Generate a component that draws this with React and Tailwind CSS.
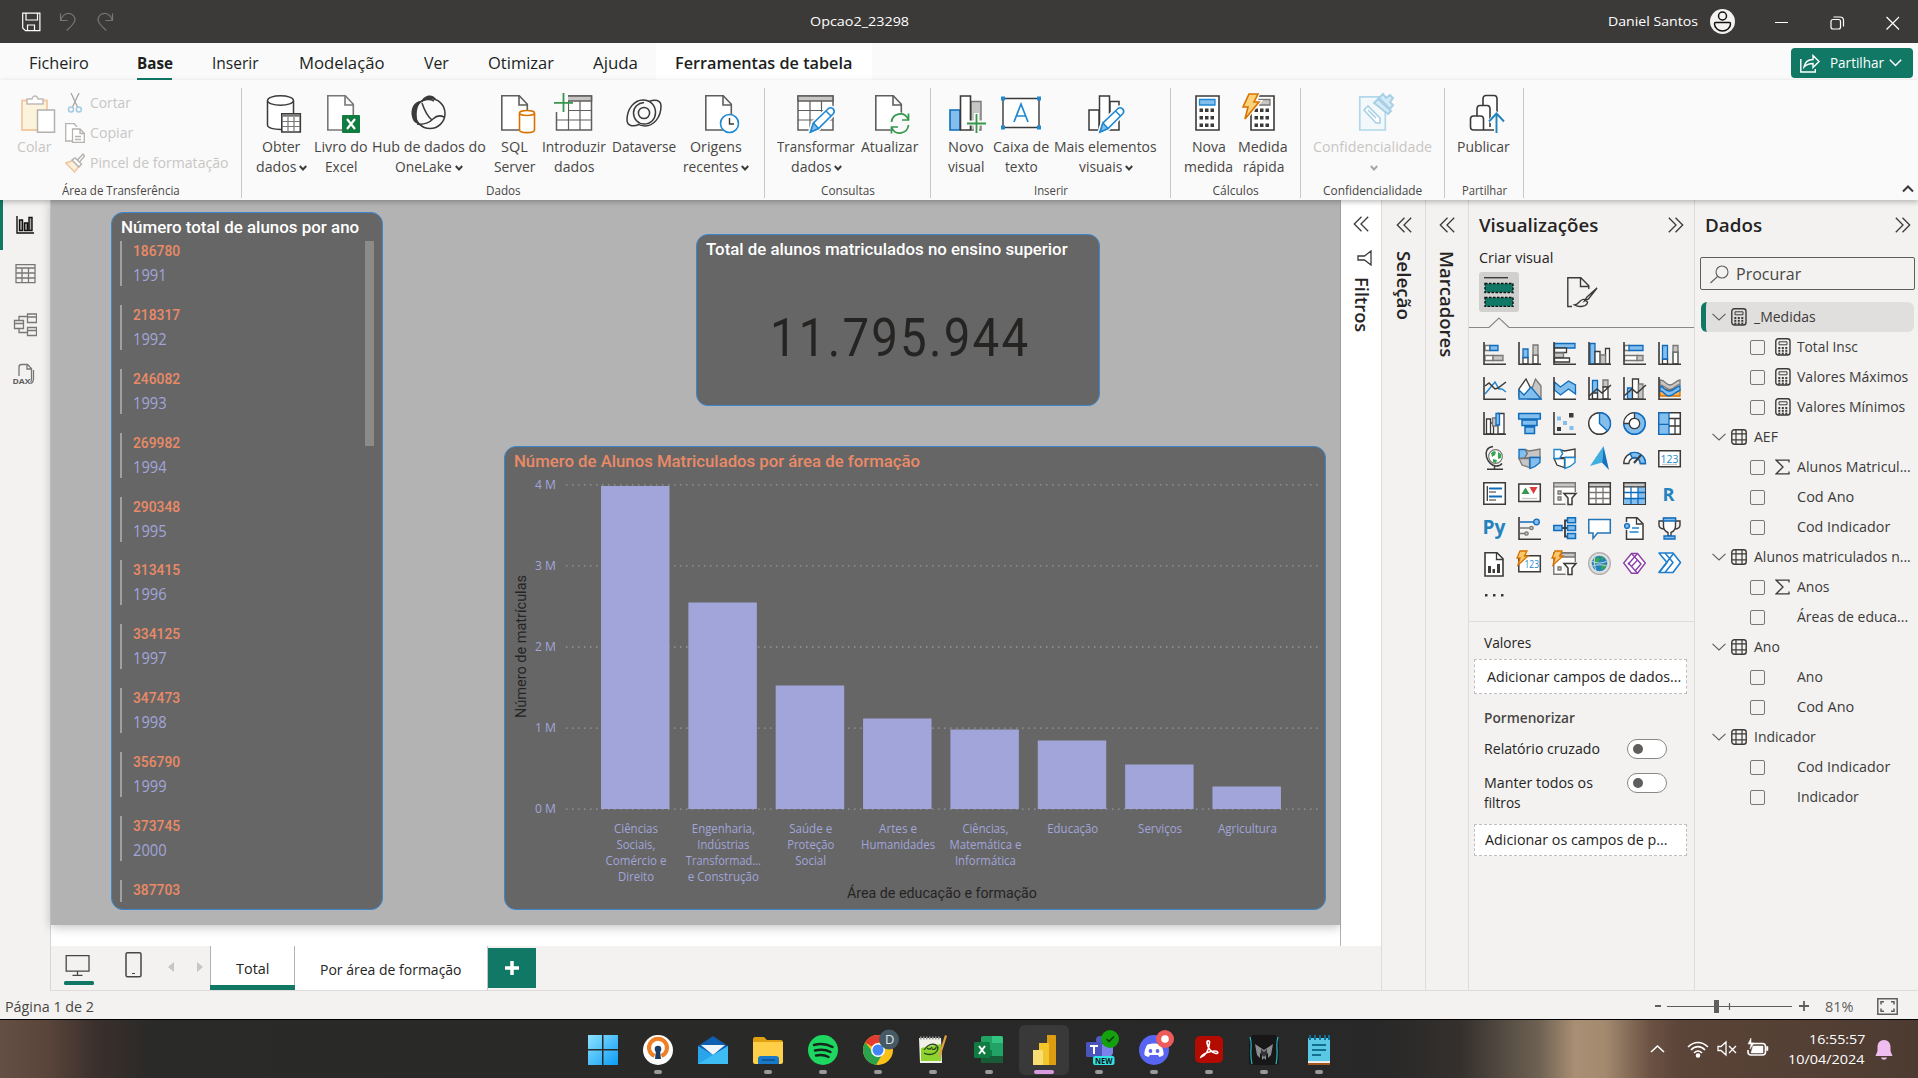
import React, { useLayoutEffect, useRef, useState } from "react";

/* Text squeezed or stretched to an exact advance width. */
function Fit({ w, vertical, className = "", children }) {
  const ref = useRef(null);
  const [k, setK] = useState(1);
  useLayoutEffect(() => {
    const n = vertical ? ref.current.offsetHeight : ref.current.offsetWidth;
    if (n) setK(w / n);
  }, [w, vertical]);
  return (
    <span
      className={"inline-block shrink-0 text-left whitespace-nowrap " + className}
      style={vertical ? { height: w } : { width: w }}
    >
      <span
        ref={ref}
        className={vertical ? "inline-block origin-top [writing-mode:vertical-rl]" : "inline-block origin-left"}
        style={{ transform: vertical ? `scaleY(${k})` : `scaleX(${k})` }}
      >
        {children}
      </span>
    </span>
  );
}

const K = "#3b3a39";
const B = "#1e88d2";
const D = "#0f6cbd";
const L = "#83beec";
const G = "#797775";
const S = "#c8c6c4";

const Doc = ({ x = 5, c = "#605e5c" }) => (
  <path d={`M${x + 0.8} .8h17.5l8 8.5V35H${x + 0.8}zM${x + 18} 1v9h8.5`} fill="#fff" stroke={c} strokeWidth="1.6" />
);
const Pencil = ({ x = 12 }) => (
  <g transform={`translate(${x} 12)`}>
    <path d="M1 25l3-9L19 1.5a3.6 3.6 0 0 1 5 5L9 21.500z" fill="#fff" stroke="#fafafa" strokeWidth="5" />
    <path d="M1 25l3-9L19 1.500a3.600 3.600 0 0 1 5 5L9 21.500z" fill="#fff" stroke={B} strokeWidth="1.600" />
    <path d="M1 25l3-9 5 5.500zM16.500 4l5 5" fill={L} stroke={B} strokeWidth="1.500" />
  </g>
);
const Grid = ({ x = 1 }) => (
  <g stroke="#605e5c" strokeWidth="1.500">
    <path d={`M${x} 1h35v34H${x}z`} fill="#fff" />
    <path d={`M${x} 1h35v5H${x}z`} fill={S} />
    <path d={`M${x} 15.500h35M${x} 25h35M${x + 12} 6v29M${x + 23.500} 6v29`} strokeWidth="1.200" fill="none" />
  </g>
);
const Keys = ({ x, y, s = 3.5, gx = 5.500, gy = 7.500, c = K }) =>
  [0, 1, 2].map((r) => [0, 1, 2].map((q) => <rect key={r + "-" + q} x={x + q * gx} y={y + r * gy} width={s} height={s} fill={c} />));

const RI = {
  get: (
    <>
      <path d="M5.500 6v24c0 6 26 6 26 0V6" fill="#fff" stroke={K} strokeWidth="1.500" />
      <ellipse cx="18.500" cy="5.500" rx="13" ry="4.800" fill="#fff" stroke={K} strokeWidth="1.500" />
      <path d="M19.800 18.800h18.500V37H19.800z" fill="#fff" stroke={K} strokeWidth="1.600" />
      <path d="M20 20.500h18" stroke={G} strokeWidth="2.500" />
      <path d="M20 26.500h18M20 31.500h18M26 22v15M32 22v15" stroke={G} strokeWidth="1.200" />
    </>
  ),
  excel: (
    <g transform="translate(-1 0)">
      <Doc x={6} c="#797775" />
      <rect x="21" y="20" width="18" height="18" rx="1" fill="#107c41" />
      <path d="M26 24l8 10M34 24l-8 10" stroke="#fff" strokeWidth="2.200" />
    </g>
  ),
  lake: (
    <g transform="translate(-1 0)">
      <circle cx="21" cy="18.500" r="15" fill="#fafafa" stroke={K} strokeWidth="1.500" />
      <path d="M12 7C15-1 25-2 28 6 22 2 17 4 12 7z" fill={K} />
      <path d="M12 6C5 6 1 14 3 22c1 4 3 6 6 7-2-9-2-16 3-23z" fill={K} />
      <path d="M12 7c3-3 9-3 13-1M13 8c2 6 5 13 10 17M8 29c8 1 12-1 16-5s7-4 11-2" fill="none" stroke={K} strokeWidth="1.500" />
    </g>
  ),
  sql: (
    <>
      <Doc />
      <path d="M23.500 18v17c0 3.500 15 3.500 15 0V18" fill="#fff" stroke="#d97300" strokeWidth="1.600" />
      <ellipse cx="31" cy="18" rx="7.500" ry="2.500" fill="#fff" stroke="#d97300" strokeWidth="1.600" />
    </>
  ),
  enter: (
    <>
      <Grid x={1.500} />
      <path d="M-1 0h14v17H-1z" fill="#fafafa" />
      <path d="M-1 7.800h19M8.500-2v19" stroke="#36964b" strokeWidth="1.800" />
    </>
  ),
  dv: (
    <g fill="none" stroke={K} strokeWidth="1.500">
      <circle cx="19" cy="18" r="5.600" />
      <path d="M14 29.500C8 32 2 31 2 25 2 14 9 5 18 5c8 0 12.500 6 12.500 12.500S26 29 19 29c-6 0-10.500-5-10.500-11S13 8 19 7.500" />
      <path d="M24 6.500C30 4 36 5 36 11c0 11-7 20-16 20-3 0-5-.5-7-2" />
    </g>
  ),
  recent: (
    <g transform="translate(1 0)">
      <Doc x={7} />
      <circle cx="31.500" cy="28.500" r="9" fill="#fff" stroke={B} strokeWidth="1.600" />
      <path d="M31.500 23v6h4.500" fill="none" stroke={K} strokeWidth="1.400" />
    </g>
  ),
  transform: (
    <>
      <Grid />
      <Pencil x={12.500} />
    </>
  ),
  refresh: (
    <g transform="translate(-1 0)">
      <Doc />
      <circle cx="30" cy="28.500" r="11" fill="#fafafa" />
      <path d="M21.500 27c1-9 13-11 16.500-3M38.500 30c-1 9-13 11-16.500 3M38.500 18.500V25h-6.500M21.500 38.500V32H28" fill="none" stroke="#36964b" strokeWidth="1.700" />
    </g>
  ),
  novo: (
    <>
      <path d="M24 6.500h10V35H24z" fill={S} stroke={G} strokeWidth="1.400" />
      <path d="M3 15h10v20H3z" fill={L} stroke={D} strokeWidth="1.600" />
      <path d="M13.500 1h10v34h-10z" fill="#fff" stroke={K} strokeWidth="1.600" />
      <path d="M20 28h19M29.500 18v19" stroke="#fafafa" strokeWidth="5" />
      <path d="M20 28.500h19M29.500 19v19" stroke="#36964b" strokeWidth="1.800" />
    </>
  ),
  textbox: (
    <>
      <path d="M1 3.500h36v29H1z" fill="#fff" stroke={K} strokeWidth="1.400" />
      <path d="M-1 1.500h4v4h-4zM35 1.500h4v4h-4zM-1 30.500h4v4h-4zM35 30.500h4v4h-4z" fill={B} />
      <path d="M12 27l7-18 7 18M14.500 21h9" fill="none" stroke={B} strokeWidth="1.700" />
    </>
  ),
  more: (
    <g transform="translate(-1 0)">
      <path d="M3 15h10v20H3zM24 6.500h9V35h-9zM13.500 1h10v34h-10z" fill="#fff" stroke={K} strokeWidth="1.500" />
      <Pencil x={13} />
    </g>
  ),
  calc: (
    <g transform="translate(-1 0)">
      <path d="M7 1h23v34H7z" fill="#fff" stroke={K} strokeWidth="1.600" />
      <path d="M10.500 4.500h15.500v5.500H10.500z" fill={L} stroke={B} strokeWidth="1.300" />
      <Keys x={10.500} y={13.500} />
    </g>
  ),
  quick: (
    <>
      <path d="M7 1h23v34H7z" fill="#fff" stroke={K} strokeWidth="1.600" />
      <path d="M15 4.500h11v5.500H15z" fill={S} stroke={G} strokeWidth="1.300" />
      <Keys x={10.500} y={13.500} />
      <path d="M5-1h9l-4 8h5L1 24l3-12h-5z" fill="#f9d27a" stroke="#fafafa" strokeWidth="4" />
      <path d="M5-1h9l-4 8h5L1 24l3-12h-5z" fill="#f9d27a" stroke="#d97300" strokeWidth="1.600" />
    </>
  ),
  conf: (
    <g transform="translate(-1 0)">
      <path d="M6.800 1.800h25.500V35H6.800z" fill="#f3f8fb" stroke="#b3d7ea" strokeWidth="1.700" />
      <path d="M11 15l4-4 12 12v5h-4zM15 15l8 8" fill="#fff" stroke="#a8d0e6" strokeWidth="1.600" />
      <path d="M21 8l4-4 13 12-3 3zM26 3l4-4 3 4 4-3 3 3-3 4 3 3-3 4z" fill="#d5eaf5" stroke="#a8d0e6" strokeWidth="2" />
    </g>
  ),
  publish: (
    <>
      <g fill="#fff" stroke={K} strokeWidth="1.600">
        <path d="M18 35V4c0-2 1-3.500 3-3.500h8c2 0 3 1.500 3 3.500v13" />
        <path d="M12 35V14c0-2 1-3.500 3-3.500h7c2 0 3 1.500 3 3.500v18" />
        <path d="M8.500 21h7c2 0 3 1 3 3v11H8.500c-2 0-3-1-3-3v-8c0-2 1-3 3-3zM18 35h11" />
      </g>
      <path d="M31.500 38V19M24 27l7.500-8 7.500 8" fill="none" stroke="#fafafa" strokeWidth="4" />
      <path d="M31.500 38V19M24 26.500l7.500-8 7.500 8" fill="none" stroke="#2383bd" strokeWidth="1.900" />
    </>
  ),
};

const Caret = ({ c = K }) => (
  <svg width="8" height="6" viewBox="0 0 8 6" className="ml-[3px] mt-[2px] shrink-0">
    <path d="M.8 1L4 4.500 7.200 1" fill="none" stroke={c} strokeWidth="1.900" />
  </svg>
);

function RBtn({ icon, a, aw, b, bw, caret, className, dim }) {
  return (
    <div className={"flex shrink-0 flex-col items-center text-[14.5px] leading-[20px] " + (dim ? "text-[#c8c6c4] " : "text-[#484644] ") + className}>
      <svg width="38" height="38" viewBox="0 0 38 38" className="mb-1 shrink-0 overflow-visible">{RI[icon]}</svg>
      <Fit w={aw} className="h-5">{a}</Fit>
      <div className="flex h-5 items-center">
        {b && <Fit w={bw}>{b}</Fit>}
        {caret && <Caret c={dim ? "#a8a6a4" : K} />}
      </div>
    </div>
  );
}

function Group({ label, lw, className, children }) {
  return (
    <div className={"flex h-[110px] shrink-0 flex-col border-r border-[#c9c8c7] " + className}>
      <div className="flex h-[95px] items-start pt-[7px]">{children}</div>
      <div className="flex h-[15px] items-center justify-center text-[12px] leading-[16px] text-[#484644]">
        <Fit w={lw}>{label}</Fit>
      </div>
    </div>
  );
}

const menu = [
  ["Ficheiro", 60, "ml-[29px]"],
  ["Base", 36, "ml-[48px]"],
  ["Inserir", 47, "ml-[39px]"],
  ["Modelação", 85, "ml-[40px]"],
  ["Ver", 25, "ml-[40px]"],
  ["Otimizar", 66, "ml-[39px]"],
  ["Ajuda", 45, "ml-[39px]"],
];

const students = [
  ["186780", "1991"], ["218317", "1992"], ["246082", "1993"], ["269982", "1994"], ["290348", "1995"], ["313415", "1996"],
  ["334125", "1997"], ["347473", "1998"], ["356790", "1999"], ["373745", "2000"], ["387703", ""],
];

const bars = [
  [486, [["Ciências", 44], ["Sociais,", 39], ["Comércio e", 61], ["Direito", 36]]],
  [602.5, [["Engenharia,", 63], ["Indústrias", 52], ["Transformad...", 75], ["e Construção", 71]]],
  [685.5, [["Saúde e", 43], ["Proteção", 47], ["Social", 31]]],
  [718.5, [["Artes e", 38], ["Humanidades", 74]]],
  [729.5, [["Ciências,", 46], ["Matemática e", 72], ["Informática", 61]]],
  [740.5, [["Educação", 51]]],
  [764.5, [["Serviços", 44]]],
  [786.500, [["Agricultura", 59]]],
];

function Chart() {
  return (
    <svg width="820" height="462" viewBox="505 447 820 462" className="font-['Open_Sans',sans-serif]">
      <text x="514" y="467" textLength="406" lengthAdjust="spacingAndGlyphs" className="fill-[#ea8a66] font-['Roboto',sans-serif] text-[16.5px] font-medium">
        Número de Alunos Matriculados por área de formação
      </text>
      {[4, 3, 2, 1, 0].map((n, i) => (
        <g key={n}>
          <text x="535" y={489 + i * 81.1} textLength="21" lengthAdjust="spacingAndGlyphs" className="fill-[#a1a5d9] text-[12px]">{n} M</text>
          <line x1="566" x2="1318" y1={484.800 + i * 81.1} y2={484.800 + i * 81.1} stroke="#999" strokeWidth="1.300" strokeDasharray="1.500 4.500" />
        </g>
      ))}
      {bars.map(([top, lines], i) => (
        <g key={i}>
          <rect x={601 + i * 87.35} y={top} width="68.500" height={809 - top} fill="#a1a5d9" />
          {lines.map(([t, w], j) => (
            <text key={t} x={636 + i * 87.35 - w / 2} y={833 + j * 16} textLength={w} lengthAdjust="spacingAndGlyphs" className="fill-[#a1a5d9] text-[12px]">{t}</text>
          ))}
        </g>
      ))}
      <text x="847" y="898" textLength="190" lengthAdjust="spacingAndGlyphs" className="fill-[#252423] font-['Roboto',sans-serif] text-[14px]">Área de educação e formação</text>
      <text transform="translate(526 718) rotate(-90)" textLength="143" lengthAdjust="spacingAndGlyphs" className="fill-[#252423] font-['Roboto',sans-serif] text-[14px]">Número de matrículas</text>
    </svg>
  );
}

const Ax = () => <path d="M1 0v22.300h22" fill="none" stroke={K} strokeWidth="1.600" />;
const st = (c, w = 1.300) => ({ stroke: c, strokeWidth: w });
const Bolt = () => <path d="M3 1h7L7.500 6H11L1 15l2-7H0z" fill="#f9c66a" {...st("#d97300")} />;
const Funnel = () => <path d="M11 11.500h12L19 16v6.500h-4V16z" fill="#fff" {...st(K, 1.500)} />;

const VI = [
  <><path d="M2 3.500h5v5H2z" fill="#fff" {...st(G)} /><path d="M7 3.500h8v5H7z" fill={L} {...st(D)} /><path d="M2 13.500h8v5H2z" fill="#fff" {...st(G)} /><path d="M10 13.500h10v5H10z" fill={S} {...st(G)} /><Ax /></>,
  <><path d="M5 15.500h5V22H5zM15 13h5v9h-5z" fill="#fff" {...st(K)} /><path d="M5 7h5v8.500H5z" fill={L} {...st(D)} /><path d="M15 3h5v10h-5z" fill={S} {...st(G)} /><Ax /></>,
  <><path d="M1.500 1.500h20.500v4.500H1.500z" fill={L} {...st(D)} /><path d="M1.500 6h12v4.500h-12z" fill="#fff" {...st(K)} /><path d="M1.500 11h9v4.500h-9z" fill={S} {...st(G)} /><path d="M1.500 16h15v4h-15z" fill="#fff" {...st(K)} /><Ax /></>,
  <><path d="M2 1.500h5V22H2z" fill={L} {...st(D)} /><path d="M7 9.500h5V22H7zM17.500 6.500h4V22h-4z" fill="#fff" {...st(K)} /><path d="M12.500 13h5v9h-5z" fill={S} {...st(G)} /><Ax /></>,
  <><path d="M1.500 3.500h5v5h-5z" fill="#fff" {...st(G)} /><path d="M6 3.500h14v5H6z" fill={L} {...st(D)} /><path d="M1.500 13.500h13v5h-13z" fill="#fff" {...st(G)} /><path d="M14 13.500h6v5h-6z" fill={S} {...st(G)} /><Ax /></>,
  <><path d="M4.500 17h5v5h-5zM15 10h5v12h-5z" fill="#fff" {...st(K)} /><path d="M4.500 3.500h5V17h-5z" fill={L} {...st(D)} /><path d="M15 3.500h5V10h-5z" fill={S} {...st(G)} /><Ax /></>,
  <><path d="M2 17L12 5l4 7 3 0 4 3" fill="none" {...st(B, 1.500)} /><path d="M2 9l4-3 6 6 3-1 8-6" fill="none" {...st(K, 1.500)} /><Ax /></>,
  <><path d="M10 22L17.500 2 23 9v13z" fill={S} {...st(G)} /><path d="M1 20V12L8 2l10 20z" fill="#fff" {...st(K)} /><path d="M1 22v-9l5 5 7-8 10 12z" fill={L} {...st(D)} /></>,
  <><path d="M1.500 22v-9l6 5 8-8 7 4v8z" fill="#fff" /><path d="M1.500 5l6 5 8-6 7 4v9l-7-5-8 6-6-5z" fill={L} {...st(D)} /><Ax /></>,
  <><path d="M4.500 3.500h5V20h-5z" fill={L} {...st(D)} /><path d="M15 3h5v7h-5z" fill={S} {...st(G)} /><path d="M15 10h5v12h-5zM4.500 16h5v6h-5z" fill="#fff" {...st(K)} /><path d="M1 19l8-7 5 4 9-8" fill="none" {...st(K, 1.500)} /><Ax /></>,
  <><path d="M4.500 11h5v11h-5z" fill={L} {...st(D)} /><path d="M9.500 2h6v20h-6z" fill="#fff" {...st(K)} /><path d="M15.500 7H20v15h-4.500z" fill={S} {...st(G)} /><path d="M1 19l8-7 5 4 9-8" fill="none" {...st(K, 1.500)} /><Ax /></>,
  <><path d="M2 12.500h20v6.500H2z" fill="#f7b25c" {...st("#d97300")} /><path d="M2 3c6 0 5 5 10 5 4 0 6-5 10-5v4.500c-4 0-6 5-10 5S7 8 2 8z" fill={S} {...st(G)} /><path d="M2 9.500c5 0 4 4.500 9 4.500s6-4 11-5v4.500c-5 1-6 5.500-11 5.500S7 14 2 14z" fill={L} {...st(D)} /><Ax /></>,
  <><path d="M3.500 7h4v15h-4zM7.500 11h3v11h-3zM15 1.500h6V22h-6z" fill="#fff" {...st(K)} /><path d="M9.500 6h4v8h-4z" fill={S} {...st(G)} /><path d="M13 1.500h3.500V13H13z" fill={L} {...st(D)} /><Ax /></>,
  <><path d="M.7 1.500h21.600V7H.7zM4 8h15v5.500H4zM7 15h9.500v6.500H7z" fill={L} {...st(D, 1.500)} /></>,
  <><path d="M4 4.500h4v4H4zM10 9h4v4h-4zM16.500 14h4v4h-4z" fill={L} /><path d="M16 1h4.500v4.500H16zM4 15h4v4H4z" fill={K} /><Ax /></>,
  <><circle cx="11.500" cy="11.500" r="10.800" fill="#fff" {...st(K, 1.400)} /><path d="M11.500.7a10.800 10.800 0 0 1 8 18.200l-8-7.400z" fill={L} {...st(D, 1.400)} /></>,
  <><circle cx="11.500" cy="11.500" r="8" fill="none" stroke={L} strokeWidth="5.500" /><path d="M.7 11.500A10.800 10.800 0 0 1 11.500.7v5.500a5.300 5.300 0 0 0-5.300 5.300z" fill="#fff" {...st(K)} /><circle cx="11.500" cy="11.500" r="5.200" fill="#fff" {...st(K)} /><path d="M11.500.7a10.800 10.800 0 1 1-10.800 10.800" fill="none" {...st(D, 1.500)} /></>,
  <><path d="M.8.800h21.500v21.500H.8z" fill="#fff" {...st(K, 1.500)} /><path d="M.8.800H11v11.500H.8zM.8 12.300H11v10H.8z" fill={L} {...st(D)} /><path d="M11 6.500h11M17 6.500v16M11 14h6M17 14h5" {...st(K)} /></>,
  <><circle cx="12.500" cy="9.500" r="6.800" fill="#fff" {...st(G, 1.200)} /><path d="M8 6l3-2 2 1-1 3-3 2zM15 5l3 2v4l-3 1zM10 12l4 1-1 3-3-1z" fill="#2fa84f" /><path d="M10-.5C4 0 2 5 3.500 10S9 19 13 19c3 0 5-1 6-2.500M11.500 19v3M4 22.300h16" fill="none" {...st(K, 1.400)} /></>,
  <><path d="M1 2.500h6.500l2 4-3 5H1z" fill={L} {...st(D)} /><path d="M7.500 3l4 1 10.500-2v8.500h-9L6.500 11l3-4.500z" fill={S} {...st(G)} /><path d="M1 11.500h10.500v9L4 18z" fill={S} {...st(G)} /><path d="M12 10.500h10v5l-5 4-5 2z" fill={L} {...st(D)} /></>,
  <><path d="M7.500 3l4 1 10.500-2v8.500h-9L6.500 11l3-4.500zM1 11.500h10.500v9L4 18z" fill="#fff" {...st(K)} /><path d="M1 2.500h6.500l2 4-3 5H1zM12 10.500h10v5l-5 4-5 2z" fill="#fff" {...st(B, 1.400)} /></>,
  <><path d="M15.500-1L2 19l12-3.500z" fill="#41aee0" /><path d="M15.500-1L21 23l-7-7.500z" fill="#1673c1" /></>,
  <><path d="M.8 16.500a10.800 10.800 0 0 1 21.600 0h-5a5.800 5.800 0 0 0-11.600 0z" fill="#fff" {...st(K, 1.400)} /><path d="M7 6.500a10.800 10.800 0 0 1 15.400 10h-5a5.800 5.800 0 0 0-8-5.500z" fill={L} {...st(D, 1.400)} /><path d="M11 16l7-8" {...st(K, 2)} /></>,
  <><path d="M.8 3.800h21.500v16H.8z" fill="#fff" {...st(K, 1.500)} /><path d="M4 17.500h15" {...st(S)} /><text x="2.500" y="15.500" textLength="18" lengthAdjust="spacingAndGlyphs" fontSize="11" fill={B}>123</text></>,
  <><path d="M.8.800h21.500v21.500H.8z" fill="#fff" {...st(K, 1.500)} /><path d="M6 6.500h13M6 14.500h13" {...st(D, 2)} /><path d="M6 10h7M6 18h7" {...st(G)} /><path d="M4.300 4v15" {...st(K)} /></>,
  <><path d="M.8 2h21.500v17.500H.8z" fill="#fff" {...st(K, 1.500)} /><path d="M7.500 5.500l4 6.500h-8z" fill="#36964b" /><path d="M15.500 12l4-7h-8z" fill="#e03c3c" /><path d="M4 16.500h15" {...st(S)} /></>,
  <><path d="M.8.800h21.500v21.500H.8z" fill="#fff" {...st(G, 1.400)} /><path d="M.8.800h21.500v4H.8z" fill={S} {...st(G)} /><path d="M5 9h3v3H5zM5 15h3v3H5z" fill={S} {...st(G)} /><path d="M9.500 10H24v14H13z" fill="#f3f2f1" /><Funnel /></>,
  <><path d="M.8.800h21.500v21.500H.8z" fill="#fff" {...st(K, 1.500)} /><path d="M.8.800h21.500v4H.8z" fill={S} {...st(K)} /><path d="M1 10.500h21M1 16.500h21M8 5v17M15 5v17" {...st(G)} /></>,
  <><path d="M.8.800h21.500v21.500H.8z" fill="#fff" {...st(K, 1.500)} /><path d="M15 5h7v17H1v-6h14z" fill={L} /><path d="M.8.800h21.500v4H.8z" fill={S} {...st(K)} /><path d="M1 10.500h21M1 16.500h21M8 5v17M15 5v17" {...st(D)} /></>,
  <text x="4.500" y="18.500" fontSize="18" fontWeight="700" textLength="12" lengthAdjust="spacingAndGlyphs" fill="#2383bd">R</text>,
  <text x="-.5" y="17" fontSize="19" fontWeight="700" textLength="23" lengthAdjust="spacingAndGlyphs" fill="#2383bd">Py</text>,
  <><path d="M2 5h14" {...st(D, 1.500)} /><circle cx="18.500" cy="5" r="2.800" fill={L} {...st(D)} /><path d="M2 11h10M2 16.500h5" {...st(G)} /><circle cx="13.500" cy="11" r="1.700" fill={S} {...st(G)} /><circle cx="8.500" cy="16.500" r="1.700" fill={S} {...st(G)} /><Ax /></>,
  <><path d="M9 11h3M14 3.500h-2v16h2M12 11h2" fill="none" {...st(K, 1.800)} /><path d="M.8 8.500H9v5H.8zM14.500.800h8v5h-8zM14.500 8.500h8v5h-8zM14.500 16.500h8v5h-8z" fill={L} {...st(D, 1.500)} /></>,
  <path d="M.8 2.500h21.500V16H9.500l-4.500 5.500V16H.8z" fill="#fff" {...st("#2373b5", 1.500)} />,
  <><path d="M3.500.800h10.500l6 6v15.500H3.500z" fill="#fff" {...st(K, 1.500)} /><path d="M13.500 1v6h6" fill="none" {...st(K)} /><circle cx="4" cy="9" r="4" fill="#f3f2f1" /><circle cx="4" cy="9" r="2.400" fill={L} {...st(D)} /><path d="M9 11h7M6.500 15h9" {...st(B)} /></>,
  <><path d="M5.500 4H1v4c0 3 3 4 6 4M17.500 4H22v4c0 3-3 4-6 4" fill="none" {...st(K, 1.400)} /><path d="M5.500 1.500h12V9c0 4-2 5.500-4.500 6.500V19h-3v-3.500C7.500 14.500 5.500 13 5.500 9z" fill="#fff" {...st(K, 1.400)} /><path d="M5.500 1h12v3h-12zM6 19h11v3H6z" fill={L} {...st(D)} /></>,
  <><path d="M2 .8h12l6 6V24H2z" fill="#fff" {...st(K, 1.600)} /><path d="M13.500 1v6.500H20" fill="none" {...st(K)} /><path d="M5 14h3v7H5zM9.500 17H12v4H9.500zM14 12h3v9h-3z" fill={K} /></>,
  <><path d="M.8 3.800h21.500v16H.8z" fill="#fff" {...st(K, 1.500)} /><text x="6.500" y="16" textLength="14.500" lengthAdjust="spacingAndGlyphs" fontSize="11" fill={B}>123</text><g transform="translate(-1 -2)"><Bolt /></g></>,
  <><path d="M.8.800h21.500v21.500H.8z" fill="#fff" {...st(G, 1.400)} /><path d="M8 1h14v4H8z" fill={S} {...st(G)} /><path d="M5 15h3v3H5z" fill={S} {...st(G)} /><path d="M9.500 10H24v14H13z" fill="#f3f2f1" /><Funnel /><g transform="translate(-1 -2)"><Bolt /></g></>,
  <><circle cx="11.500" cy="11.500" r="10.800" fill="#e1dfdd" {...st("#b3b0ad", 1.400)} /><circle cx="11.500" cy="11.500" r="7.800" fill="#2383bd" /><path d="M6 8c3-3 5-3 6-1l-2 4-4 1zM13 14l5-3-1 5-4 2zM12 4l4 2-2 3z" fill="#36a84f" /><path d="M2 8c6 4 13 4 19 0M2 15c6-3 13-3 19 0M8 1c-3 8-2 15 2 21" fill="none" {...st("#c8d6dd", 1)} /></>,
  <g fill="none" {...st("#8b3fa8", 1.400)}><path d="M8.500 1.500h6L22.300 11l-7.800 10.200h-6L.7 11z" fill="#fff" /><path d="M8.500 1.500l6 6.500-6 6.500-3.500-3.700M14.500 21.200L8.500 14.500M14.500 1.500L5 12.500M14.500 8L18 12l-6 7" /></g>,
  <g fill="#fff" {...st("#1e7fd0", 1.600)} strokeLinejoin="round"><path d="M1 1h14l7.500 9.500L15 20.500H1l8-10z" /><path d="M7 1l8 9.500-8 10M1 20.500L15.500 1.500" fill="none" /></g>,
];

const Chevs = ({ right }) => (
  <svg width="16" height="16" viewBox="0 0 16 16" className="shrink-0">
    <path d={right ? "M.8.800L8 8 .8 15.200M7.500.800L14.700 8l-7.200 7.200" : "M8.500.800L1.300 8l7.200 7.200M15.200.800L8 8l7.200 7.200"} fill="none" stroke={K} strokeWidth="1.300" />
  </svg>
);

const TableIco = () => (
  <svg width="16" height="16" viewBox="0 0 16 16"><rect x=".8" y=".8" width="14.400" height="14.400" rx="2.500" fill="none" stroke={K} strokeWidth="1.400" /><path d="M.8 4.800h14.400M.8 10.800h14.400M5 1v14M11 1v14" stroke={K} strokeWidth="1.200" /></svg>
);
const CalcIco = () => (
  <svg width="16" height="18" viewBox="0 0 16 18"><rect x=".8" y=".8" width="14.200" height="16.200" rx="2.500" fill="none" stroke={K} strokeWidth="1.400" /><path d="M4 3.800h8v3H4z" fill="none" stroke={K} /><Keys x={3.300} y={9} s={2} gx={3.500} gy={2.800} /></svg>
);

const tree = [
  ["t", "_Medidas", 62], ["c", "Total Insc", 61, "calc"], ["c", "Valores Máximos", 111, "calc"], ["c", "Valores Mínimos", 108, "calc"],
  ["t", "AEF", 24], ["c", "Alunos Matricul...", 114, "sum"], ["c", "Cod Ano", 57], ["c", "Cod Indicador", 93],
  ["t", "Alunos matriculados n...", 157], ["c", "Anos", 33, "sum"], ["c", "Áreas de educa...", 111],
  ["t", "Ano", 26], ["c", "Ano", 26], ["c", "Cod Ano", 57],
  ["t", "Indicador", 62], ["c", "Cod Indicador", 93], ["c", "Indicador", 62],
];

function TreeRow({ row, active }) {
  const [type, text, w, icon] = row;
  if (type === "t")
    return (
      <div className={"ml-[6px] flex h-[30px] w-[213px] items-center rounded-md " + (active ? "border-l-[5px] border-[#117865] bg-[#e1dfdd] pl-[6px]" : "pl-[11px]")}>
        <svg width="14" height="8" viewBox="0 0 14 8"><path d="M.5.800L7 7l6.500-6.200" fill="none" stroke="#605e5c" strokeWidth="1.100" /></svg>
        <span className="ml-[5px] mr-[7px] w-4">{active ? <CalcIco /> : <TableIco />}</span>
        <Fit w={w}>{text}</Fit>
      </div>
    );
  return (
    <div className="flex h-[30px] items-center pl-[55px]">
      <span className="h-[15px] w-[15px] rounded-[2px] border border-[#797775]" />
      <span className="ml-[10px] mr-[7px] w-[15px]">
        {icon === "calc" && <CalcIco />}
        {icon === "sum" && <svg width="15" height="16" viewBox="0 0 15 16"><path d="M14 3.500V1.200H1.200L8 8l-6.800 6.800H14v-2.300" fill="none" stroke={K} strokeWidth="1.300" /></svg>}
      </span>
      <Fit w={w}>{text}</Fit>
    </div>
  );
}

const Toggle = () => (
  <span className="flex h-5 w-10 shrink-0 items-center rounded-full border border-[#8a8886] bg-white pl-[5px]"><span className="h-[10px] w-[10px] rounded-full bg-[#605e5c]" /></span>
);

const apps = [
  { dot: 0, d: <><defs><linearGradient id="w" x2="1" y2="1"><stop stopColor="#8fe2ff" /><stop offset="1" stopColor="#0a9cf5" /></linearGradient></defs><path d="M0 0h14v14H0zM15.500 0H30v14H15.500zM0 15.500h14V30H0zM15.500 15.500H30V30H15.500z" fill="url(#w)" /></> },
  { dot: 1, d: <><circle cx="15" cy="15" r="15" fill="#fff" /><path d="M11.500 21A9 9 0 1 1 18.500 21" fill="none" stroke="#ef7e24" strokeWidth="4" /><circle cx="15" cy="14" r="3.300" fill="#1c3d63" /><path d="M13 15h4l1 9h-6z" fill="#1c3d63" /></> },
  { dot: 0, d: <><path d="M0 11L15 1l15 10v18H0z" fill="#0f5fb0" /><path d="M3 10h24L15 20z" fill="#eef5fa" /><path d="M0 11l15 9 15-9v18H0z" fill="#2aa5ea" /><path d="M30 11v18H0z" fill="#42c3f5" opacity=".8" /></> },
  { dot: 1, d: <><path d="M0 4c0-1 1-2 2-2h9l3 3h14c1 0 2 1 2 2v6H0z" fill="#e0a010" /><path d="M0 7h30v20c0 1-1 2-2 2H2c-1 0-2-1-2-2z" fill="#ffcf48" /><path d="M5 24c0-2 1-3 3-3h15c2 0 3 1 3 3v5H5z" fill="#1879c9" /><path d="M9 25h13" stroke="#0c4f8e" strokeWidth="1.500" /></> },
  { dot: 1, d: <><circle cx="15" cy="15" r="15" fill="#1ed760" /><path d="M6 10c7-2 13-1 18.500 2M7 15.500c6-1.500 11-1 15.500 1.500M8 20.500c5-1 9-.5 12.500 1.500" fill="none" stroke="#14251a" strokeWidth="2.500" strokeLinecap="round" /></> },
  { dot: 1, d: <><circle cx="15" cy="15" r="15" fill="#fbc116" /><path d="M15 15L2 7.500a15 15 0 0 1 26 0H15z" fill="#e33b2e" /><path d="M2 7.500a15 15 0 0 0 11 22.400L20 18l-9 0z" fill="#2ba24c" /><circle cx="15" cy="15" r="7" fill="#fff" /><circle cx="15" cy="15" r="5.500" fill="#4285f4" /><circle cx="26" cy="4.500" r="10" fill="#455a64" /><text x="22" y="9" fontSize="13" fill="#dfe5e8">D</text></> },
  { dot: 1, d: <><path d="M1 3h22l1 25H2z" fill="#f1f1ea" /><path d="M3 13l20-4v17H3z" fill="#8fd32e" /><path d="M2 3h20" stroke="#999" strokeWidth="3" strokeDasharray="1.500 1.500" /><path d="M6 15c3-5 8-7 12-5 3 2 2 6-1 8s-8 2-11 0M9 13c2 2 4 1 5-1M14 14c2 1 4 0 4-2" fill="none" stroke="#2c4a1c" strokeWidth="1.400" /><path d="M29 1l-6.500 20-2 2v-3L27 0z" fill="#e3a23c" /></> },
  { dot: 1, d: <><rect x="7" y="1" width="22" height="27" rx="2" fill="#21a366" /><path d="M18 1h9c1 0 2 1 2 2v5H18z" fill="#33c481" /><path d="M7 15h11v7H7z" fill="#107c41" /><path d="M7 21h22v5c0 1-1 2-2 2H9c-1 0-2-1-2-2z" fill="#185c37" /><rect y="7" width="16" height="16" rx="1.500" fill="#107c41" /><path d="M5 11l6 8M11 11l-6 8" stroke="#fff" strokeWidth="2" /></> },
  { dot: 2, d: <><path d="M18 0h8c1 0 1 1 1 1v29h-9z" fill="#dd9d10" /><path d="M10 8h9c1 0 1 1 1 1v21H10z" fill="#f2c52c" /><path d="M4 15h9c1 0 1 1 1 1v14H4z" fill="#f8de72" /></> },
  { dot: 1, d: <><circle cx="16" cy="5" r="4" fill="#5059c9" /><path d="M11 9h18v8c0 8-14 8-16 2z" fill="#7b83eb" /><rect x="2" y="7" width="16" height="15" rx="1.500" fill="#4b53bc" /><path d="M6 11h8M10 11v8" stroke="#fff" strokeWidth="2" /><circle cx="26" cy="4" r="9" fill="#13a10e" /><path d="M22.500 4l2.500 2.500L30 1.500" fill="none" stroke="#123b12" strokeWidth="1.600" /><rect x="9" y="21" width="21.500" height="9" rx="2" fill="#30e3e3" /><text x="11" y="28.500" fontSize="8.500" fontWeight="700" textLength="17.500" lengthAdjust="spacingAndGlyphs" fill="#111">NEW</text></> },
  { dot: 1, d: <><circle cx="15" cy="15" r="15" fill="#5865f2" /><path d="M8 10c4-2 10-2 14 0 2 4 3 7 2.500 10-2 1.500-4 2-4 2L19 20h-8l-1.500 2s-2-.5-4-2C5 17 6 14 8 10z" fill="#fff" /><circle cx="11.500" cy="16" r="1.900" fill="#5865f2" /><circle cx="18.500" cy="16" r="1.900" fill="#5865f2" /><circle cx="26" cy="4" r="9" fill="#ee5b5b" /><circle cx="26" cy="4" r="3.800" fill="#fff" /></> },
  { dot: 1, d: <><rect x="1" y="1" width="28" height="27" rx="5" fill="#b30b00" /><path d="M7 22c5-2 8-8 8.500-14 .5-3-3-3-2.500 0 1 6 5 10 9 10.500 3 0 2-2.500-1-2.500-5 0-13 3-14 6z" fill="none" stroke="#fff" strokeWidth="1.600" /></> },
  { dot: 1, d: <><path d="M3 0h24l3 8v20l-2 2H2l-2-2V8z" fill="#171717" /><path d="M1 2c3 8-1 14 2 27M29 2c-3 8 1 14-2 27" fill="none" stroke="#26b6c2" strokeWidth="1.200" /><path d="M6 9l9 6 9-6-2 11-3 3v-5l-2 1v6l-2-2-2 2v-6l-2-1v5l-3-3z" fill="#8a8d90" /><path d="M12 14l3 3 3-3v5l-3 3-3-3z" fill="#333" /></> },
  { dot: 1, d: <><path d="M4 3h22v26H4z" fill="#5ac8e4" /><path d="M4 26h22v4H4z" fill="#a5581c" /><path d="M4 26h22v2H4z" fill="#eee" /><path d="M6 0v5M11 0v5M16 0v5M21 0v5M25 0v5" stroke="#0f6f96" strokeWidth="2" /><path d="M8 10h14M8 15h14M8 20h9" stroke="#11708f" strokeWidth="2" /></> },
];

export default function App() {
  return (
    <div className="flex h-[1078px] w-[1918px] flex-col overflow-hidden bg-[#f3f2f1] font-['Open_Sans',sans-serif] text-[#252423]">
      {/* Title bar */}
      <header className="flex h-[43px] shrink-0 items-center bg-[#3b3a38] text-[13.5px] text-white">
        <svg width="100" height="20" viewBox="0 0 100 20" className="ml-[22px] w-[100px]" fill="none">
          <path d="M.7 1.200h17.200v17.500H3.500L.7 16zM4 1.500v6.500h11.500V1.500M5.500 18.500v-5.500h7v5.500" stroke="#fff" strokeWidth="1.200" />
          <path d="M38.500 1.500v7h7M38.700 8c3-8 10-8 13-4s1 7-7 14.500" stroke="#797673" strokeWidth="1.200" />
          <path d="M90.500 1.500v7h-7M90.300 8c-3-8-10-8-13-4s-1 7 7 14.500" stroke="#797673" strokeWidth="1.200" />
        </svg>
        <Fit w={99} className="ml-[688px]">Opcao2_23298</Fit>
        <Fit w={90} className="ml-[699px]">Daniel Santos</Fit>
        <svg width="25" height="25" viewBox="0 0 25 25" className="ml-3"><circle cx="12.500" cy="12.500" r="12.500" fill="#f3f2f1" /><circle cx="12.500" cy="7" r="4" fill="none" stroke="#111" strokeWidth="1.500" /><path d="M5.500 13.500h14c1 0 1 1 1 1.500 0 4-4 7-8 7s-8-3-8-7c0-.5 0-1.500 1-1.500z" fill="none" stroke="#111" strokeWidth="1.500" /></svg>
        <svg width="125" height="16" viewBox="0 0 125 16" className="ml-10 mt-[2px]" fill="none" stroke="#fff" strokeWidth="1.200"><path d="M0 7.500h13M111.500 2l12.500 12.500M124 2L111.500 14.500" /><rect x="56" y="4.500" width="9.500" height="9.500" rx="2" /><path d="M58.500 2h6.500c2 0 3.500 1.500 3.500 3.500v6" /></svg>
      </header>

      {/* Menu tabs */}
      <nav className="flex h-[37px] shrink-0 items-stretch bg-[#fafafa] text-[16.5px] leading-[40px] text-[#201f1e]">
        {menu.map(([t, w, c]) => (
          <div key={t} className={"flex shrink-0 flex-col " + c}>
            <Fit w={w} className={"h-[35px] " + (t === "Base" ? "font-bold" : "")}>{t}</Fit>
            {t === "Base" && <span className="h-[3px] w-[35px] shrink-0 bg-[#117865]" />}
          </div>
        ))}
        <div className="ml-[18px] w-[216px] shrink-0 bg-white pl-[19px] font-semibold"><Fit w={177}>Ferramentas de tabela</Fit></div>
        <div className="ml-[919px] mt-[5px] flex h-[30px] w-[122px] items-center rounded bg-[#117865] pl-[9px] text-[14px] leading-5 text-white">
          <svg width="20" height="19" viewBox="0 0 20 19" fill="none" stroke="#fff" strokeWidth="1.400"><path d="M.8 5v13h14.500v-3" /><path d="M4 13C5 8 8 5.500 13 5.500V1.500l6 6-6 6v-4C9 9.500 6.500 10.500 4 13z" /></svg>
          <Fit w={54} className="ml-[10px]">Partilhar</Fit>
          <svg width="13" height="8" viewBox="0 0 13 8" className="ml-[5px]"><path d="M.8.800L6.500 6.500 12.200.800" fill="none" stroke="#fff" strokeWidth="1.500" /></svg>
        </div>
      </nav>

      {/* Ribbon */}
      <div className="relative z-10 flex h-[120px] shrink-0 items-start bg-[#fafafa] pt-2 shadow-[0_2px_5px_rgba(0,0,0,0.25)]">
        <Group label="Área de Transferência" lw={118} className="w-[242px]">
          <div className="ml-[17px] flex w-[35px] flex-col items-center text-[14.5px] leading-5 text-[#c8c6c4]">
            <svg width="35" height="38" viewBox="0 0 35 38" className="mb-1 overflow-visible">
              <path d="M5 5.500h25V35H5z" fill="#fcf3dc" stroke="#f3c9a2" strokeWidth="1.800" />
              <path d="M10 9V4h5c1-4 5-4 6 0h5v5z" fill="#fff" stroke="#bebbb8" strokeWidth="1.500" />
              <path d="M20.500 15h17v22.200h-17z" fill="#fff" stroke="#b3b0ad" strokeWidth="1.500" />
            </svg>
            <Fit w={35}>Colar</Fit>
          </div>
          <div className="ml-[13px] -mt-[7px] flex flex-col text-[14.5px] leading-[30px] text-[#c8c6c4]">
            <div className="flex h-[30px] items-center"><svg width="20" height="20" viewBox="0 0 20 20" className="mr-[5px]" fill="none"><path d="M6 0l6.500 14M14 0L7.500 14" stroke="#a8a6a4" strokeWidth="1.300" /><circle cx="6" cy="16.500" r="2.500" stroke="#a3cbe3" strokeWidth="1.500" /><circle cx="13.800" cy="16.500" r="2.500" stroke="#a3cbe3" strokeWidth="1.500" /></svg><Fit w={41}>Cortar</Fit></div>
            <div className="flex h-[30px] items-center"><svg width="20" height="20" viewBox="0 0 20 20" className="mr-[5px]" fill="#fff" stroke="#b5b2af" strokeWidth="1.300"><path d="M7 18H.7V.7H9l3 3" /><path d="M7.500 6h7.500l4.300 4.300v9H7.500zM15 6v4.500h4M10 13.500h6M10 16.500h6" /></svg><Fit w={43}>Copiar</Fit></div>
            <div className="flex h-[30px] items-center"><svg width="20" height="20" viewBox="0 0 20 20" className="mr-[5px]"><path d="M.7 10l7-2.500 6 6-4 5.500z" fill="#fcefdc" stroke="#f0c39c" strokeWidth="1.400" /><path d="M7 7l3-2 6.500 6-2.500 3zM12.500 7L18 1l1.500 2L14.500 9" fill="#fff" stroke="#b5b2af" strokeWidth="1.400" /></svg><Fit w={139}>Pincel de formatação</Fit></div>
          </div>
        </Group>
        <Group label="Dados" lw={35} className="w-[523px]">
          <RBtn icon="get" a="Obter" aw={38} b="dados" bw={40} caret className="ml-[11px] w-[56px]" />
          <RBtn icon="excel" a="Livro do" aw={53} b="Excel" bw={32} className="ml-[5px] w-[53px]" />
          <RBtn icon="lake" a="Hub de dados do" aw={114} b="OneLake" bw={57} caret className="ml-[5px] w-[114px]" />
          <RBtn icon="sql" a="SQL" aw={27} b="Server" bw={41} className="ml-[8px] w-[41px]" />
          <RBtn icon="enter" a="Introduzir" aw={64} b="dados" bw={40} className="ml-[7px] w-[64px]" />
          <RBtn icon="dv" a="Dataverse" aw={64} className="ml-[6px] w-[64px]" />
          <RBtn icon="recent" a="Origens" aw={52} b="recentes" bw={55} caret className="ml-[7px] w-[66px]" />
        </Group>
        <Group label="Consultas" lw={54} className="w-[166px]">
          <RBtn icon="transform" a="Transformar" aw={78} b="dados" bw={40} caret className="ml-[12px] w-[78px]" />
          <RBtn icon="refresh" a="Atualizar" aw={57} className="ml-[6px] w-[57px]" />
        </Group>
        <Group label="Inserir" lw={34} className="w-[240px]">
          <RBtn icon="novo" a="Novo" aw={36} b="visual" bw={36} className="ml-[16px] w-[38px]" />
          <RBtn icon="textbox" a="Caixa de" aw={56} b="texto" bw={33} className="ml-[8px] w-[56px]" />
          <RBtn icon="more" a="Mais elementos" aw={103} b="visuais" bw={43} caret className="ml-[5px] w-[103px]" />
        </Group>
        <Group label="Cálculos" lw={46} className="w-[130px]">
          <RBtn icon="calc" a="Nova" aw={34} b="medida" bw={49} className="ml-[13px] w-[49px]" />
          <RBtn icon="quick" a="Medida" aw={50} b="rápida" bw={41} className="ml-[5px] w-[50px]" />
        </Group>
        <Group label="Confidencialidade" lw={99} className="w-[144px]">
          <RBtn icon="conf" a="Confidencialidade" aw={119} caret dim className="ml-[12px] w-[119px]" />
        </Group>
        <Group label="Partilhar" lw={45} className="w-[79px]">
          <RBtn icon="publish" a="Publicar" aw={53} className="ml-[12px] w-[53px]" />
        </Group>
        <svg width="12" height="8" viewBox="0 0 12 8" className="ml-auto mr-[4px] mt-[97px]"><path d="M1 6.500L6 1.500l5 5" fill="none" stroke={K} strokeWidth="2" /></svg>
      </div>

      {/* Workspace */}
      <div className="flex h-[791px] shrink-0">
        <aside className="flex w-[51px] shrink-0 flex-col border-r border-[#d8d6d4]">
          <div className="flex h-[50px] items-center border-l-[3px] border-[#117865] pl-[13px]">
            <svg width="18" height="18" viewBox="0 0 18 18" fill="none" stroke="#111" strokeWidth="1.400"><path d="M1 0v17h17" /><path d="M3.500 4h3v10.500h-3zM8.500 7h3v7.500h-3zM13 1.500h3v13h-3z" fill="#a8a6a4" /></svg>
          </div>
          <svg width="24" height="140" viewBox="0 0 24 140" className="ml-[13px] mt-[14px]" fill="none" stroke="#797775" strokeWidth="1.300">
            <path d="M3 .700h19v18H3zM3 4h19M3 9h19M3 14h19M9 4v15M15.500 4v15" />
            <path d="M1.500 56.500h9v8h-9zM1.500 59.500h9M14.500 50h9v8.500h-9zM14.500 53h9M14.500 63.500h9v8h-9zM14.500 66.500h9M6 56.500v-4h8.500M6 64.500v4h8.500" />
            <path d="M6 112v-9c0-1.500 1-2.500 2.500-2.500h6l4 4v10c0 2 0 3-1 3.500M14 101v4h4.500M20.500 106v8c0 3-1 5-3 5.500" />
            <text x="-.5" y="120" fontSize="7.500" textLength="18" lengthAdjust="spacingAndGlyphs" fill="#605e5c" stroke="none" fontWeight="700">DAX</text>
          </svg>
        </aside>

        <main className="flex w-[1330px] shrink-0 flex-col">
          <div className="flex h-[746px] shrink-0">
            <div className="flex w-[1290px] shrink-0 flex-col border-r border-[#b3b0ad] bg-white">
              <div className="flex h-[725px] shrink-0 items-start bg-[#b3b3b3] shadow-[0_2px_10px_rgba(0,0,0,0.25)]">
                <section className="ml-[60px] mt-3 h-[698px] w-[272px] rounded-xl border border-[#3a87cf] bg-[#666]">
                  <div className="ml-[9px] h-[28px] pt-[3px] font-['Roboto',sans-serif] text-[16.5px] font-medium leading-[24px] text-white"><Fit w={238}>Número total de alunos por ano</Fit></div>
                  <div className="flex h-[661px] justify-between overflow-hidden">
                    <div className="ml-2">
                      {students.map(([v, y]) => (
                        <div key={v} className="flex h-[63.9px]">
                          <div className="h-[45px] w-[2px] bg-[#a0a09e]" />
                          <div className="ml-[11px] flex flex-col">
                            <Fit w={47} className="h-[19px] font-['Roboto',sans-serif] text-[15px] font-medium leading-[20px] text-[#ea8a66]">{v}</Fit>
                            {y && <Fit w={34} className="mt-[5px] text-[16px] leading-[20px] text-[#a1a5d9]">{y}</Fit>}
                          </div>
                        </div>
                      ))}
                    </div>
                    <div className="mr-2 h-[205px] w-[9px] bg-[#8b8b8a]" />
                  </div>
                </section>
                <div className="ml-[121px] flex flex-col">
                  <section className="ml-[192px] mt-[34px] flex h-[172px] w-[404px] flex-col rounded-xl border border-[#3a87cf] bg-[#666]">
                    <Fit w={362} className="ml-[9px] mt-[3px] font-['Roboto',sans-serif] text-[16.5px] font-medium leading-[24px] text-white">Total de alunos matriculados no ensino superior</Fit>
                    <Fit w={260} className="ml-[73px] mt-[46px] font-['Roboto',sans-serif] text-[54px] leading-[60px] tracking-[2.5px]">11.795.944</Fit>
                  </section>
                  <section className="mt-10 h-[464px] w-[822px] rounded-xl border border-[#3a87cf] bg-[#666]"><Chart /></section>
                </div>
              </div>
            </div>
            <div className="flex w-10 shrink-0 flex-col items-center bg-white pt-[16px] text-[18px] font-semibold leading-[24px]">
              <Chevs />
              <svg width="15" height="16" viewBox="0 0 15 16" className="ml-[6px] mt-[18px]"><path d="M14 1v14L7.500 10H1V6h6.500z" fill="none" stroke={K} strokeWidth="1.300" /></svg>
              <Fit vertical w={55} className="ml-[2px] mt-[11px]">Filtros</Fit>
            </div>
          </div>

          {/* Page tabs */}
          <div className="flex h-[45px] shrink-0 items-stretch border-b border-[#dedcda] text-[14px]">
            <svg width="142" height="40" viewBox="52 946 142 40" className="ml-px shrink-0 overflow-visible" fill="none">
              <path d="M66.200 955.700h22.800v15.500H66.200zM77.500 971v4M72.500 975.300h10" stroke="#484644" strokeWidth="1.300" />
              <rect x="64" y="981" width="30" height="4" rx="1.500" fill="#117865" />
              <rect x="126" y="952.700" width="15" height="24" rx="1.500" stroke="#484644" strokeWidth="1.500" /><path d="M132 973.500h3" stroke="#484644" />
              <path d="M174 962v10l-6-5zM197 962v10l6-5z" fill="#c8c6c4" />
            </svg>
            <div className="ml-4 flex w-[85px] shrink-0 flex-col items-center border-x border-[#b3b0ad] bg-white">
              <div className="flex h-[39px] items-center pt-[6px] font-medium"><Fit w={33}>Total</Fit></div>
              <div className="h-[5px] w-[85px] bg-[#117865]" />
            </div>
            <div className="flex w-[193px] shrink-0 items-center border-r border-[#c8c6c4] bg-white pl-[25px] pt-[2px]"><Fit w={142}>Por área de formação</Fit></div>
            <div className="mt-[2px] flex h-10 w-12 items-center justify-center bg-[#117865]"><svg width="14" height="14"><path d="M7 0v14M0 7h14" stroke="#fff" strokeWidth="3.500" /></svg></div>
          </div>
        </main>

        <div className="flex w-[45px] shrink-0 flex-col items-center border-x border-b border-[#dedcda] pt-[17px] text-[18px] font-semibold leading-[24px]">
          <Chevs />
          <Fit vertical w={69} className="mt-[18px]">Seleção</Fit>
        </div>
        <div className="flex w-[42px] shrink-0 flex-col items-center border-b border-[#dedcda] pt-[17px] text-[18px] font-semibold leading-[24px]">
          <Chevs />
          <Fit vertical w={106} className="mt-[18px]">Marcadores</Fit>
        </div>

        {/* Visualizations */}
        <section className="flex w-[227px] shrink-0 flex-col border-x border-b border-[#dedcda] text-[14px] leading-5">
          <div className="ml-[10px] mt-[11px] flex h-7 items-center text-[18.5px] font-semibold"><Fit w={119}>Visualizações</Fit><span className="ml-[70px]"><Chevs right /></span></div>
          <Fit w={74} className="ml-[10px] mt-[9px]">Criar visual</Fit>
          <div className="ml-[10px] mt-1 flex h-10">
            <div className="flex h-10 w-10 items-center justify-center rounded-[3px] bg-[#d2d0ce]">
              <svg width="30" height="30" viewBox="0 0 30 30"><path d="M0 .7h24" stroke={K} strokeWidth="1.400" /><path d="M1 6.500h28v9H1zM1 20.500h28v9H1z" fill="#117865" stroke="#111" strokeWidth="1.400" strokeDasharray="2.500 1.500" /></svg>
            </div>
            <svg width="31" height="31" viewBox="0 0 31 31" className="ml-12 mt-[5px]" fill="none" stroke={K} strokeWidth="1.400"><path d="M5 29.500H.8V.800h13l8 8V12M13.500 1v8.500H22" /><path d="M30 11L20 20l-2.500 4 4-2zM17.500 22.500c-5-1-5 5-10 5.500 4 2.500 13 2 13-3z" /></svg>
          </div>
          <svg width="225" height="14" viewBox="0 0 225 14" className="mt-[3px] shrink-0"><path d="M0 12.500h20l10-9.500 10 9.500h185" fill="none" stroke="#8a8886" strokeWidth="1.200" /></svg>
          <div className="ml-[14px] mt-[13px] grid w-[200px] grid-cols-[repeat(6,23px)] gap-3">
            {VI.map((d, i) => <svg key={i} width="23" height="23" viewBox="0 0 23 23" className="overflow-visible">{d}</svg>)}
          </div>
          <svg width="20" height="4" className="ml-[16px] mt-[18px] shrink-0"><path d="M0 1h2.500v2.500H0zM8 1h2.500v2.500H8zM16 1h2.500v2.500H16z" fill={K} /></svg>
          <div className="mt-[24px] flex flex-col border-t border-[#dedcda] pl-[15px] pt-[11px]">
            <Fit w={47}>Valores</Fit>
            <div className="-ml-[10px] mt-[6px] flex h-[35px] w-[213px] items-center border border-dashed border-[#c0bebc] bg-white pl-[12px]"><Fit w={194}>Adicionar campos de dados...</Fit></div>
            <Fit w={91} className="mt-[14px] font-semibold text-[#484644]">Pormenorizar</Fit>
            <div className="mt-[11px] flex"><Fit w={116}>Relatório cruzado</Fit><span className="ml-[27px]"><Toggle /></span></div>
            <div className="mt-[14px] flex"><span className="flex w-[143px] flex-col"><Fit w={109}>Manter todos os</Fit><Fit w={37}>filtros</Fit></span><Toggle /></div>
            <div className="-ml-[10px] mt-[11px] flex h-[32px] w-[213px] items-center border border-dashed border-[#c0bebc] bg-white pl-[10px]"><Fit w={182}>Adicionar os campos de p...</Fit></div>
          </div>
        </section>

        {/* Data */}
        <section className="flex w-[223px] shrink-0 flex-col border-b border-[#dedcda] text-[14px] leading-5">
          <div className="ml-[10px] mt-[11px] flex h-7 items-center text-[18.5px] font-semibold"><Fit w={57}>Dados</Fit><span className="ml-[133px]"><Chevs right /></span></div>
          <div className="ml-[5px] mt-[18px] flex h-[33px] w-[215px] items-center rounded-[2px] border border-[#605e5c] pl-[9px] pt-px text-[16.500px] text-[#484644]">
            <svg width="19" height="19" viewBox="0 0 19 19"><circle cx="12" cy="7" r="6" fill="none" stroke="#605e5c" strokeWidth="1.100" /><path d="M7.500 11.500L.5 18" stroke="#605e5c" strokeWidth="1.100" /></svg>
            <Fit w={65} className="ml-[7px]">Procurar</Fit>
          </div>
          <div className="mt-[12px] flex flex-col text-[#3b3a39]">{tree.map((r, i) => <TreeRow key={i} row={r} active={i === 0} />)}</div>
        </section>
      </div>

      {/* Status bar */}
      <div className="flex h-[28px] shrink-0 items-center pb-[1px] pt-[3px] text-[14px] text-[#484644]">
        <Fit w={89} className="ml-[5px]">Página 1 de 2</Fit>
        <svg width="154" height="16" viewBox="0 0 154 16" className="ml-[1561px]"><path d="M0 8h6" stroke="#605e5c" strokeWidth="2" /><path d="M12 8.500h125M74.500 5v7" stroke="#605e5c" strokeWidth="1.200" /><path d="M59 2h5v13h-5z" fill="#605e5c" /><path d="M144 8h10M149 3v10" stroke="#605e5c" strokeWidth="1.800" /></svg>
        <Fit w={29} className="ml-4 text-[#605e5c]">81%</Fit>
        <svg width="21" height="17" viewBox="0 0 21 17" className="ml-[23px]" fill="none" stroke="#605e5c" strokeWidth="1.500"><path d="M.8.800h19.400v15.400H.8z" /><path d="M4 6.500V3.800h3M14 3.800h3v2.700M17 10.500v2.700h-3M7 13.200H4v-2.700" /></svg>
      </div>

      {/* Taskbar */}
      <footer className="flex h-[59px] shrink-0 items-start border-t border-black bg-[linear-gradient(90deg,#634f43_0px,#584439_50px,#3b302c_95px,#2a2a29_150px,#282828_1380px,#34302d_1460px,#6f6253_1540px,#a98f73_1575px,#a38a6f_1605px,#6b5243_1650px,#5b4438_1680px,#4d3b31_1918px)]">
        <div className="ml-[575px] flex h-[58px] shrink-0">
          {apps.map((a, i) => (
            <div key={i} className="flex w-[55.150px] shrink-0 justify-center pt-[5px]">
              <div className={"flex h-[50px] w-[50px] flex-col items-center rounded-md pt-[10px] " + (a.dot === 2 ? "bg-[#393939]" : "")}>
                <svg width="30" height="30" viewBox="0 0 30 30" className="shrink-0 overflow-visible">{a.d}</svg>
                {a.dot > 0 && <span className={"mt-[5px] h-[4px] shrink-0 rounded-full " + (a.dot === 2 ? "w-5 bg-[#d79ce0]" : "w-2 bg-[#9a9a9a]")} />}
              </div>
            </div>
          ))}
        </div>
        <svg width="120" height="22" viewBox="0 0 120 22" className="ml-[303px] mt-[18px] shrink-0" fill="none" stroke="#fff" strokeWidth="1.600">
          <path d="M1 14l6.500-6 6.500 6" />
          <path d="M38 9c6-6 14-6 20 0M41 12c4-4.500 10-4.500 14 0M44 15c2.500-2.500 5.500-2.500 8 0" /><circle cx="48" cy="17.500" r="1.500" fill="#fff" />
          <path d="M68 8.500h3l5-4.500v13l-5-4.500h-3zM79 8l7 7M86 8l-7 7" strokeWidth="1.300" />
          <path d="M101 5.500h11.500c2 0 3 1 3 3V14c0 2-1 3-3 3H101c-2 0-3-1-3-3v-2" /><path d="M103 8h10v7h-12zM116.500 8.500h1.500v4h-1.500zM101 0l-3 6h3l-1 5 4-6h-3z" fill="#fff" strokeWidth=".5" />
        </svg>
        <div className="ml-[14px] mt-[9px] flex w-[81px] shrink-0 flex-col items-end text-[13.500px] leading-[20px] text-white"><Fit w={56}>16:55:57</Fit><Fit w={77}>10/04/2024</Fit></div>
        <svg width="18" height="21" viewBox="0 0 18 21" className="ml-[10px] mt-[20px] shrink-0"><path d="M9 0c4 0 6.500 3 6.500 7v4l2 5H.5l2-5V7C2.500 3 5 0 9 0zM6 17.500h6c-1 3-5 3-6 0z" fill="#f0bdf0" /></svg>
      </footer>
    </div>
  );
}
